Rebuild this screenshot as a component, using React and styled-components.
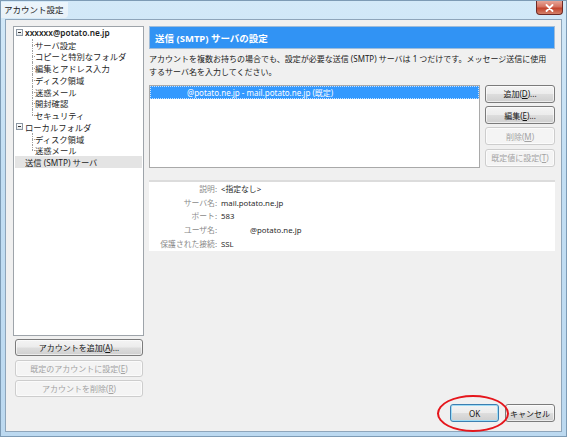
import React from 'react';
import styled, { createGlobalStyle } from 'styled-components';

const Global = createGlobalStyle`
  html, body { margin: 0; padding: 0; overflow: hidden; background: #c3def3; }
  * { box-sizing: border-box; }
`;

const FONT = `"Noto Sans", "Noto Sans CJK JP", sans-serif`;

const Window = styled.div`
  position: relative;
  width: 567px;
  height: 437px;
  display: flex;
  flex-direction: column;
  background: linear-gradient(180deg, #d3e9f8 0%, #c2def3 40%, #bcd9f0 100%);
  border: 1px solid #7d9bb5;
  font-family: ${FONT};
  color: #1e1e1e;
`;

const TitleBar = styled.div`
  height: 18px;
  display: flex;
  align-items: flex-start;
  justify-content: space-between;
`;

const Title = styled.div`
  margin-top: 1px;
  height: 16px;
  padding: 0 4px 0 3px;
  font-size: 8.5px;
  line-height: 16px;
  color: #222;
  background: linear-gradient(180deg, rgba(255,255,255,0.55), rgba(240,244,247,0.75));
  border-radius: 0 0 4px 0;
`;

const CloseBtn = styled.div`
  width: 27px;
  height: 14px;
  margin-right: 3px;
  border: 1px solid #6e2a25;
  border-top: none;
  border-radius: 0 0 4px 4px;
  background: linear-gradient(180deg, #e7a597 0%, #d4715f 45%, #c2432c 55%, #d5826a 100%);
  display: flex;
  align-items: center;
  justify-content: center;
`;

const Body = styled.div`
  flex: 1;
  margin: 0 4px 4px 4px;
  padding: 6px 6px 0 7px;
  background: #f0f0f0;
  border: 1px solid #8ea5ba;
  display: flex;
  flex-direction: column;
`;

const Main = styled.div`
  display: flex;
  gap: 5px;
  height: 372px;
`;

const LeftCol = styled.div`
  width: 131px;
  display: flex;
  flex-direction: column;
`;

const Tree = styled.div`
  height: 310px;
  border: 1px solid #9ea4aa;
  background: #fff;
  padding: 0 1px;
`;

const Row = styled.div`
  position: relative;
  height: 11.75px;
  display: flex;
  align-items: center;
  font-size: 8.3px;
  white-space: nowrap;
  padding-left: ${({ level }) => (level ? '20px' : '1px')};
  background: ${({ selected }) => (selected ? '#e4e4e4' : 'transparent')};
  font-weight: ${({ bold }) => (bold ? 600 : 400)};

  ${({ level, last }) =>
    level
      ? `
    &::before {
      content: '';
      position: absolute;
      left: 17px;
      top: 0;
      height: ${last ? '50%' : '100%'};
      border-left: 1px dotted #a0a0a0;
    }
    &::after {
      content: '';
      position: absolute;
      left: 17px;
      top: 50%;
      width: 3px;
      border-top: 1px dotted #a0a0a0;
    }
  `
      : ''}
`;

const Expander = styled.span`
  width: 7px;
  height: 7px;
  margin-right: 2px;
  border: 1px solid #8c97a3;
  background: linear-gradient(180deg, #fff, #e2e6ea);
  display: inline-flex;
  align-items: center;
  justify-content: center;

  &::after {
    content: '';
    width: 3px;
    border-top: 1px solid #333;
  }
`;

const NoExpander = styled.span`
  width: 9px;
  display: inline-block;
`;

const LeftButtons = styled.div`
  display: flex;
  flex-direction: column;
  gap: 3.5px;
  margin-top: 3px;
  padding: 0 1px 0 2px;
`;

const Button = styled.div`
  height: ${({ h }) => h || 17}px;
  width: ${({ w }) => (w ? `${w}px` : 'auto')};
  display: flex;
  align-items: center;
  justify-content: center;
  font-size: 8px;
  white-space: nowrap;
  border-radius: 3px;
  border: 1px solid ${({ disabled, focus }) => (disabled ? '#cdcdcd' : focus ? '#3c7fb1' : '#7b7b7b')};
  color: ${({ disabled }) => (disabled ? '#a3a3a3' : '#151515')};
  background: ${({ disabled }) =>
    disabled
      ? '#f4f4f4'
      : 'linear-gradient(180deg, #f4f4f4 0%, #ececec 48%, #dddddd 52%, #cfcfcf 100%)'};
  box-shadow: ${({ focus }) => (focus ? 'inset 0 0 0 1px #9fdcf6' : 'inset 0 0 0 1px rgba(255,255,255,0.6)')};

  u { text-decoration: underline; }
`;

const RightCol = styled.div`
  flex: 1;
  display: flex;
  flex-direction: column;
`;

const Header = styled.div`
  height: 23px;
  background: #3193f4;
  border: 1px solid #9fbcd9;
  color: #fff;
  font-size: 9.5px;
  font-weight: 700;
  display: flex;
  align-items: center;
  padding-left: 5px;
`;

const Desc = styled.div`
  margin-top: 3px;
  font-size: 8px;
  line-height: 13.4px;
  white-space: nowrap;
  color: #222;
`;

const ListArea = styled.div`
  display: flex;
  gap: 5px;
  margin-top: 6px;
`;

const List = styled.div`
  width: 331px;
  height: 83px;
  border: 1px solid #a9a9a9;
  background: #fff;
  padding: 0;
`;

const ListItem = styled.div`
  height: 13px;
  background: #3399ff;
  border: 1px dotted #c8e2ff;
  color: #fff;
  font-size: 8px;
  display: flex;
  align-items: center;
  padding-left: 36px;
  white-space: nowrap;
`;

const SideButtons = styled.div`
  flex: 1;
  display: flex;
  flex-direction: column;
  gap: 3.3px;
`;

const Details = styled.div`
  margin-top: 12px;
  height: 71px;
  background: #fff;
  border-top: 2px solid #dcdcdc;
  display: grid;
  grid-template-columns: 68px 1fr;
  column-gap: 4px;
  align-content: start;
  padding-top: 1px;
  font-size: 7.8px;
`;

const Label = styled.div`
  height: 13.75px;
  line-height: 13.75px;
  text-align: right;
  color: #8a8a8a;
  white-space: nowrap;
`;

const Value = styled.div`
  height: 13.75px;
  line-height: 13.75px;
  color: #2a2a2a;
  white-space: nowrap;
  padding-left: ${({ indent }) => indent || 0}px;
`;

const Footer = styled.div`
  display: flex;
  justify-content: flex-end;
  gap: 6px;
  margin-top: 6px;
`;

const Annotation = styled.div`
  position: absolute;
  left: 436px;
  top: 394px;
  width: 72px;
  height: 37px;
  border: 2px solid #e5161c;
  border-radius: 50%;
  pointer-events: none;
`;

const treeItems = [
  { label: 'xxxxxx@potato.ne.jp', level: 0, expander: true, bold: true },
  { label: 'サーバ設定', level: 1 },
  { label: 'コピーと特別なフォルダ', level: 1 },
  { label: '編集とアドレス入力', level: 1 },
  { label: 'ディスク領域', level: 1 },
  { label: '迷惑メール', level: 1 },
  { label: '開封確認', level: 1 },
  { label: 'セキュリティ', level: 1, last: true },
  { label: 'ローカルフォルダ', level: 0, expander: true },
  { label: 'ディスク領域', level: 1 },
  { label: '迷惑メール', level: 1, last: true },
  { label: '送信 (SMTP) サーバ', level: 0, selected: true },
];

const details = [
  ['説明:', '<指定なし>'],
  ['サーバ名:', 'mail.potato.ne.jp'],
  ['ポート:', '583'],
  ['ユーザ名:', '@potato.ne.jp', 29],
  ['保護された接続:', 'SSL'],
];

export default function App() {
  return (
    <>
      <Global />
      <Window>
        <TitleBar>
          <Title>アカウント設定</Title>
          <CloseBtn>
            <svg width="9" height="8" viewBox="0 0 9 8">
              <path d="M1.5 1 L7.5 7 M7.5 1 L1.5 7" stroke="#fff" strokeWidth="1.8" strokeLinecap="round" />
            </svg>
          </CloseBtn>
        </TitleBar>
        <Body>
          <Main>
            <LeftCol>
              <Tree>
                {treeItems.map((it, i) => (
                  <Row key={i} level={it.level} last={it.last} selected={it.selected} bold={it.bold}>
                    {it.level === 0 && (it.expander ? <Expander /> : <NoExpander />)}
                    {it.label}
                  </Row>
                ))}
              </Tree>
              <LeftButtons>
                <Button>アカウントを追加(<u>A</u>)...</Button>
                <Button disabled>既定のアカウントに設定(<u>E</u>)</Button>
                <Button disabled>アカウントを削除(<u>R</u>)</Button>
              </LeftButtons>
            </LeftCol>
            <RightCol>
              <Header>送信 (SMTP) サーバの設定</Header>
              <Desc>
                アカウントを複数お持ちの場合でも、設定が必要な送信 (SMTP) サーバは 1 つだけです。メッセージ送信に使用
                <br />
                するサーバ名を入力してください。
              </Desc>
              <ListArea>
                <List>
                  <ListItem>@potato.ne.jp - mail.potato.ne.jp (既定)</ListItem>
                </List>
                <SideButtons>
                  <Button h={18}>追加(<u>D</u>)...</Button>
                  <Button h={18}>編集(<u>E</u>)...</Button>
                  <Button h={18} disabled>削除(<u>M</u>)</Button>
                  <Button h={18} disabled>既定値に設定(<u>T</u>)</Button>
                </SideButtons>
              </ListArea>
              <Details>
                {details.map(([l, v, indent]) => (
                  <React.Fragment key={l}>
                    <Label>{l}</Label>
                    <Value indent={indent}>{v}</Value>
                  </React.Fragment>
                ))}
              </Details>
            </RightCol>
          </Main>
          <Footer>
            <Button h={18} w={49} focus>OK</Button>
            <Button h={18} w={50}>キャンセル</Button>
          </Footer>
        </Body>
        <Annotation />
      </Window>
    </>
  );
}
